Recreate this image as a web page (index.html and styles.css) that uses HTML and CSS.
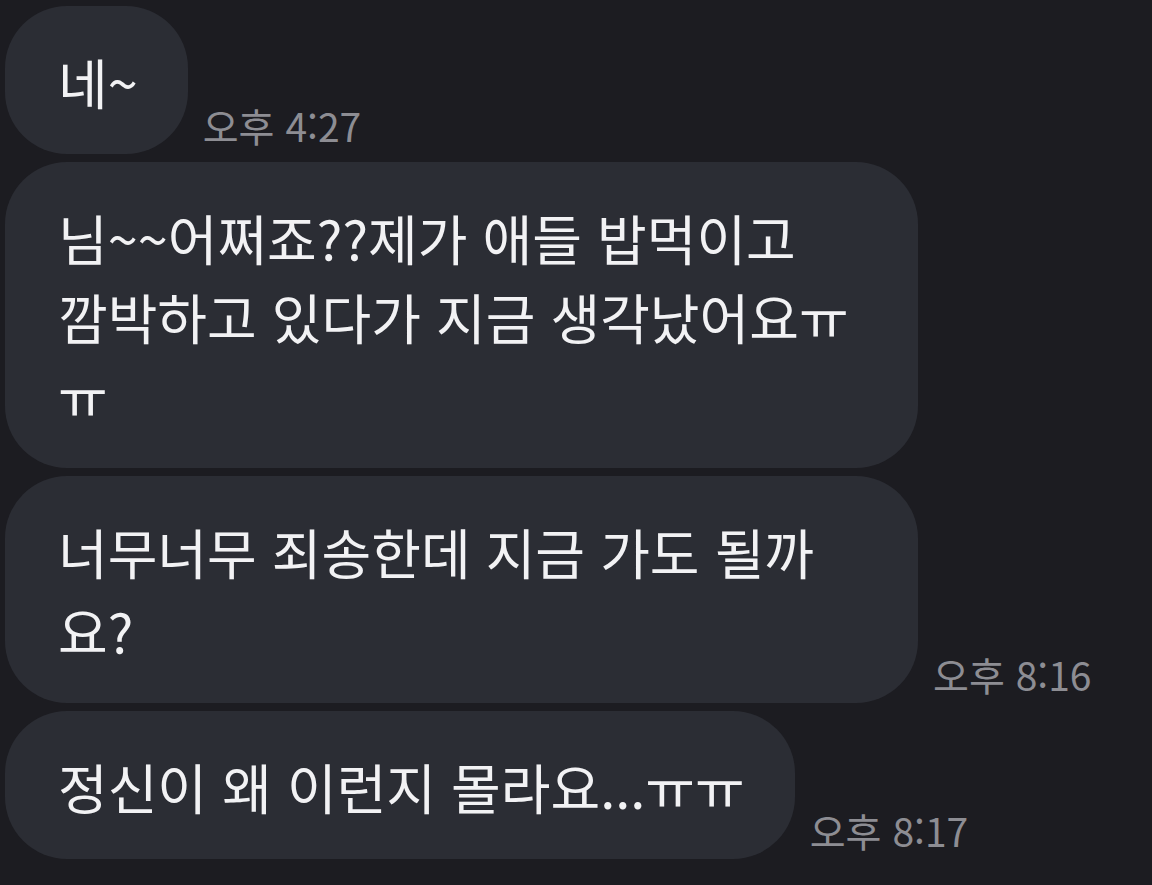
FILE: index.html
```html
<!DOCTYPE html>
<html lang="ko">
<head>
<meta charset="utf-8">
<title>Chat</title>
<link rel="stylesheet" href="styles.css">
</head>
<body>
<div class="chat">
  <div class="row">
    <div class="bubble">네~</div>
    <div class="time">오후 4:27</div>
  </div>
  <div class="row">
    <div class="bubble full">님~~어쩌죠??제가 애들 밥먹이고<br>깜박하고 있다가 지금 생각났어요ㅠ<br>ㅠ</div>
  </div>
  <div class="row">
    <div class="bubble full">너무너무 죄송한데 지금 가도 될까<br>요?</div>
    <div class="time">오후 8:16</div>
  </div>
  <div class="row">
    <div class="bubble">정신이 왜 이런지 몰라요...ㅠㅠ</div>
    <div class="time">오후 8:17</div>
  </div>
</div>
</body>
</html>
```

FILE: styles.css
```css
html, body {
  margin: 0;
  padding: 0;
  background: #1c1c21;
}

body {
  width: 1152px;
  height: 885px;
  overflow: hidden;
  font-family: "Noto Sans CJK KR", "Noto Sans", sans-serif;
}

.chat {
  display: flex;
  flex-direction: column;
  gap: 8px;
  padding: 6px 0 0 5px;
}

.row {
  display: flex;
  align-items: flex-end;
  gap: 15px;
}

.bubble {
  background: #2b2d34;
  color: #f2f2f4;
  border-radius: 62px;
  padding: 36px 50px 33px 53px;
  font-size: 54px;
  line-height: 79px;
  white-space: nowrap;
}

.bubble.full {
  width: 810px;
}

.time {
  color: #8d8d93;
  font-size: 39px;
  line-height: 1;
  margin-bottom: 9px;
  white-space: nowrap;
}
```
